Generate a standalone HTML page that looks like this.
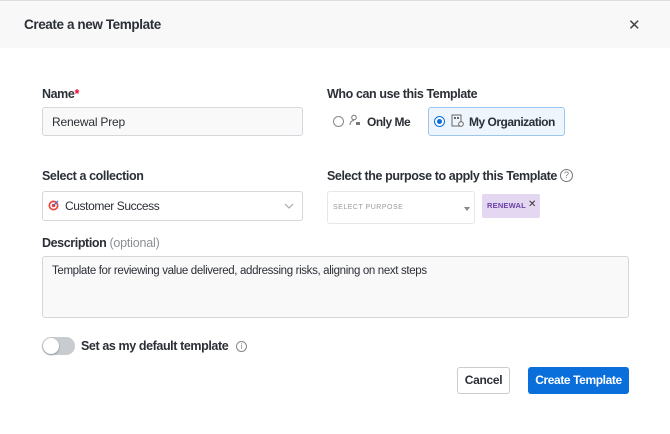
<!DOCTYPE html>
<html><head><meta charset="utf-8"><style>
*{box-sizing:border-box;margin:0;padding:0}
body{width:670px;height:434px;background:#fff;font-family:"Liberation Sans",sans-serif;color:#2b2f36;position:relative;overflow:hidden}
.a{position:absolute;white-space:nowrap}
.hdr{left:0;top:0;width:670px;height:48px;background:#f8f8f8;border-top:1px solid #ddd}
.lbl{font-size:12.5px;font-weight:bold;color:#2b2f36;letter-spacing:-0.4px}
.box{border:1px solid #d4d7dc;border-radius:3px;background:#fff}
.t{font-size:12px;color:#2b2f36;letter-spacing:-0.2px}
</style></head><body>
<div class="a hdr"></div>
<div class="a lbl" style="left:24px;top:17px;font-size:13.5px;letter-spacing:-0.4px">Create a new Template</div>
<div class="a" style="left:628px;top:16px;font-size:15px;color:#444">✕</div>

<div class="a lbl" style="left:42px;top:87px">Name<span style="color:#e03">*</span></div>
<div class="a box" style="left:42px;top:107px;width:261px;height:29px;background:#f9f9f9"></div>
<div class="a t" style="left:52px;top:115px">Renewal Prep</div>

<div class="a lbl" style="left:327px;top:87px">Who can use this Template</div>
<div class="a" style="left:333px;top:116px;width:11px;height:11px;border:1px solid #888;border-radius:50%"></div>
<svg class="a" style="left:349px;top:114px" width="13" height="13" viewBox="0 0 13 13"><circle cx="5" cy="3.5" r="2.3" fill="none" stroke="#777" stroke-width="1"/><path d="M1 11c0-3 2-4.5 4-4.5" fill="none" stroke="#777"/><rect x="7" y="8" width="4" height="3" fill="#777"/></svg>
<div class="a t" style="left:367px;top:115px;font-weight:bold;letter-spacing:-0.5px">Only Me</div>
<div class="a" style="left:428px;top:107px;width:137px;height:29px;background:#eef5fd;border:1px solid #9cc6ee;border-radius:3px"></div>
<div class="a" style="left:434px;top:116px;width:11px;height:11px;border:1px solid #0a6fdb;border-radius:50%;background:#fff"></div>
<div class="a" style="left:437px;top:119px;width:5px;height:5px;border-radius:50%;background:#0a6fdb"></div>
<svg class="a" style="left:451px;top:114px" width="13" height="13" viewBox="0 0 13 13"><rect x="1" y="1" width="9" height="11" fill="none" stroke="#666"/><rect x="3" y="3" width="2" height="2" fill="#666"/><rect x="6" y="3" width="2" height="2" fill="#666"/><circle cx="10" cy="10" r="2.3" fill="#fff" stroke="#666"/></svg>
<div class="a t" style="left:469px;top:115px;font-weight:bold;letter-spacing:-0.5px">My Organization</div>

<div class="a lbl" style="left:42px;top:169px">Select a collection</div>
<div class="a box" style="left:42px;top:191px;width:261px;height:30px"></div>
<svg class="a" style="left:48px;top:200px" width="11" height="11" viewBox="0 0 11 11"><circle cx="5.5" cy="5.5" r="5" fill="#e8453c"/><circle cx="5.5" cy="5.5" r="3.3" fill="#fff"/><circle cx="5.5" cy="5.5" r="1.8" fill="#e8453c"/><path d="M5.5 5.5L10 1" stroke="#3a6fc4" stroke-width="1.2"/></svg>
<div class="a t" style="left:65px;top:199px;letter-spacing:-0.4px">Customer Success</div>
<svg class="a" style="left:284px;top:203px" width="10" height="6" viewBox="0 0 10 6"><path d="M1 1l4 4 4-4" fill="none" stroke="#aaa" stroke-width="1.2"/></svg>

<div class="a lbl" style="left:327px;top:169px">Select the purpose to apply this Template</div>
<div class="a" style="left:560px;top:169px;width:13px;height:13px;border:1px solid #777;border-radius:50%;font-size:9px;text-align:center;line-height:11px;color:#777">?</div>
<div class="a box" style="left:327px;top:191px;width:148px;height:33px;border-color:#e6e7ea"></div>
<div class="a" style="left:333px;top:204px;font-size:7px;letter-spacing:.5px;color:#999">SELECT PURPOSE</div>
<div class="a" style="left:464px;top:207px;width:0;height:0;border-left:3px solid transparent;border-right:3px solid transparent;border-top:4px solid #888"></div>
<div class="a" style="left:482px;top:194px;width:58px;height:24px;background:#e4d7f1;border-radius:2px"></div>
<div class="a" style="left:487px;top:201px;font-size:7.5px;font-weight:bold;letter-spacing:.2px;color:#6a3fa3">RENEWAL</div>
<div class="a" style="left:528px;top:199px;font-size:10px;color:#333">✕</div>

<div class="a lbl" style="left:42px;top:236px">Description <span style="font-weight:normal;color:#8a8f96;letter-spacing:-0.2px">(optional)</span></div>
<div class="a box" style="left:42px;top:256px;width:587px;height:62px;background:#f9f9f9"></div>
<div class="a" style="left:52px;top:265px;font-size:11.5px;letter-spacing:-0.35px;color:#2b2f36">Template for reviewing value delivered, addressing risks, aligning on next steps</div>

<div class="a" style="left:42px;top:337px;width:33px;height:18px;background:#c8cbd0;border-radius:9px"></div>
<div class="a" style="left:43px;top:338px;width:16px;height:16px;background:#fff;border-radius:50%;box-shadow:0 1px 2px rgba(0,0,0,.3)"></div>
<div class="a lbl" style="left:81px;top:339px">Set as my default template</div>
<div class="a" style="left:236px;top:341px;width:11px;height:11px;border:1px solid #888;border-radius:50%;font-size:8px;text-align:center;line-height:9px;color:#888">i</div>

<div class="a" style="left:457px;top:367px;width:53px;height:27px;border:1px solid #c9ccd1;border-radius:3px;font-size:12px;font-weight:bold;text-align:center;line-height:25px;letter-spacing:-0.3px">Cancel</div>
<div class="a" style="left:528px;top:367px;width:101px;height:27px;background:#0a6fdb;border-radius:3px;font-size:12px;font-weight:bold;color:#fff;text-align:center;line-height:27px;letter-spacing:-0.4px">Create Template</div>
</body></html>
